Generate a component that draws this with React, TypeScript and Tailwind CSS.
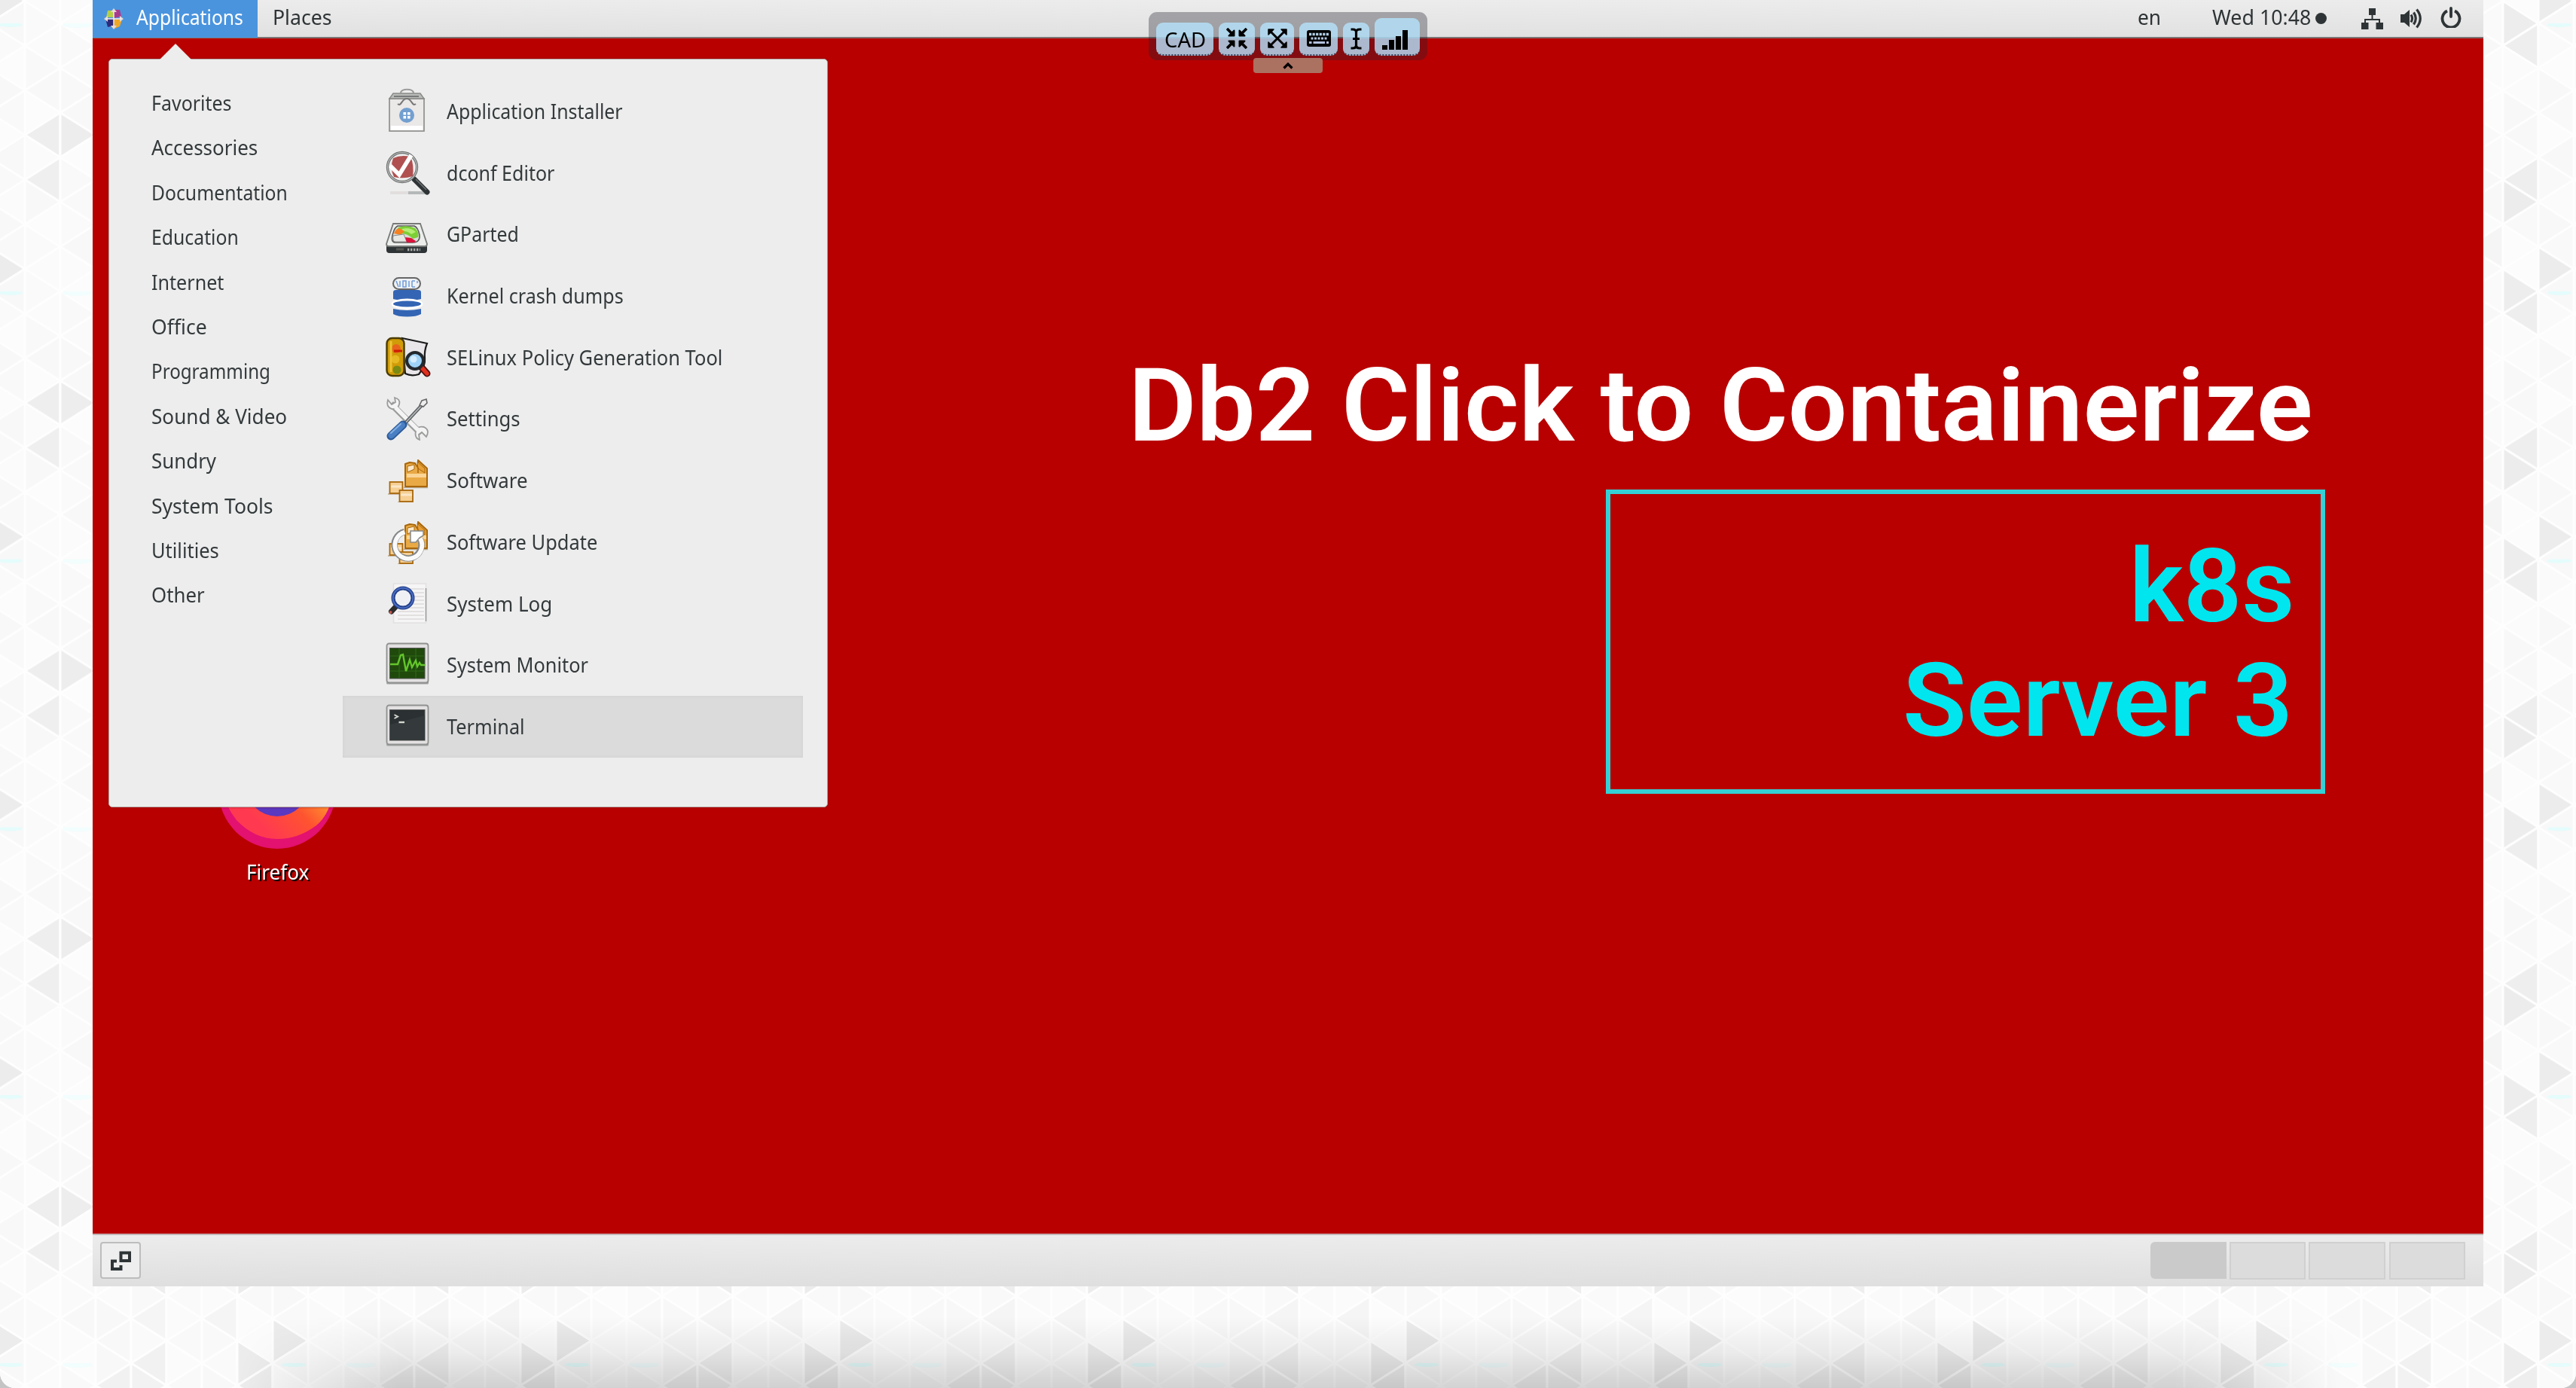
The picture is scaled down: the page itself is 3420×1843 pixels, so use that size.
import { useLayoutEffect, useRef, useState } from "react";
import type { ReactNode } from "react";

/* Text squeezed or stretched horizontally to a given width. */
function Fit({ w, children }: { w: number; children: ReactNode }) {
  const ref = useRef<HTMLSpanElement>(null);
  const [scale, setScale] = useState(1);
  useLayoutEffect(() => {
    if (ref.current) setScale(w / ref.current.offsetWidth);
  }, [w]);
  return (
    <span className="block whitespace-nowrap" style={{ width: w }}>
      <span ref={ref} className="inline-block origin-left whitespace-nowrap" style={{ transform: `scaleX(${scale})` }}>
        {children}
      </span>
    </span>
  );
}

/* ---------- Triangle backdrop ---------- */
const CW = 47;
const RH = 29.65;
const DARK: Record<string, string> = {
  "0:5": "#eeeeee", "0:7": "#efefef", "1:5": "#ededed", "7:11": "#ececec",
  "2:1": "#f1f1f1", "3:1": "#f2f2f2", "3:0": "#f1f1f1", "3:10": "#f5f5f5", "3:8": "#eeeeee",
  "5:10": "#f5f5f5", "6:8": "#ececec", "6:0": "#ededed", "6:1": "#eeeeee", "6:7": "#eeeeee",
};
const LIGHT = ["#fafafa", "#f9f9f9", "#fcfcfc", "#fbfbfb", "#f8f8f8"];

function Backdrop() {
  const tris: ReactNode[] = [];
  for (let c = 0; c < 8; c++) {
    for (let k = -1; k <= 12; k++) {
      const kk = (k + 12) % 12;
      const apexLeft = (c + kk) % 2 === 1;
      const xa = apexLeft ? c * CW : (c + 1) * CW;
      const xb = apexLeft ? (c + 1) * CW : c * CW;
      const fill = DARK[`${c}:${kk}`] ?? LIGHT[(c * 7 + kk * 3 + ((c * kk) % 4)) % 5];
      tris.push(
        <polygon key={`${c}-${k}`} points={`${xa},${k * RH} ${xb},${(k - 1) * RH} ${xb},${(k + 1) * RH}`} fill={fill} stroke="#fefefe" strokeWidth="3" strokeLinejoin="round" />
      );
    }
  }
  return (
    <svg className="absolute inset-0 h-full w-full">
      <defs>
        <pattern id="tri" patternUnits="userSpaceOnUse" x="33" y="31" width="376" height="355.8">
          {tris}
          <ellipse cx="357" cy="2" rx="16" ry="3" fill="#e4fcfc" />
          <ellipse cx="70" cy="2" rx="20" ry="4" fill="#f2fdfd" />
        </pattern>
      </defs>
      <rect width="100%" height="100%" fill="url(#tri)" />
    </svg>
  );
}

/* ---------- Menu icons, each on a 60 by 60 canvas ---------- */
function BagIcon() {
  return (
    <>
      <rect x="7" y="16" width="46" height="43" fill="#ebe8e8" stroke="#888a85" strokeWidth="1.6" />
      <rect x="9" y="52" width="42" height="6" fill="#fff" />
      <path d="M7 16 12 9H48L53 16Z" fill="#b9bbb8" stroke="#888a85" strokeWidth="1.4" />
      <path d="M13 13H46" stroke="#77797a" strokeWidth="2" />
      <path d="M22 9C22 2 39 2 39 9" fill="none" stroke="#9a9c99" strokeWidth="2.2" />
      <path d="M18 23C23 27 23 16 30 16S37 27 42 23" fill="none" stroke="#777" strokeWidth="2" />
      <circle cx="30" cy="38" r="10" fill="#729fcf" />
      <path d="M25.5 34h3.6v3.4h-3.6zM31 34h3.6v3.4H31zM25.5 39h3.6v3.4h-3.6zM31 39h3.6v3.4H31z" fill="#fff" />
    </>
  );
}
function DconfIcon() {
  return (
    <>
      <path d="M8 59H32" stroke="#e2dede" strokeWidth="4" />
      <path d="M32 59H56" stroke="#b5b8b8" strokeWidth="4" />
      <path d="M40 41 57 58" stroke="#2e3436" strokeWidth="7" strokeLinecap="round" />
      <path d="M42 41 56 55" stroke="#777" strokeWidth="1.2" />
      <circle cx="24" cy="25" r="19.5" fill="#eee" stroke="#6f7271" strokeWidth="3.4" />
      <circle cx="24" cy="25" r="19.5" fill="none" stroke="#b9bbba" strokeWidth="1.2" />
      <path d="M12 13Q22 8 35 11Q40 22 38 37Q26 41 13 38Q7 26 12 13Z" fill="#b05050" />
      <path d="M8 23 20 35 36 9" fill="none" stroke="#fff" strokeWidth="5.5" />
    </>
  );
}
function GPartedIcon() {
  return (
    <>
      <path d="M3 46H57V54Q57 58 53 58H7Q3 58 3 54Z" fill="#2e3436" />
      <path d="M12 19H48L57 46Q57 49 54 49H6Q3 49 3 46Z" fill="#eceeec" stroke="#777a77" strokeWidth="1.8" />
      <path d="M18 22H40Q45 24 47 34Q48 44 38 44H14Q8 43 12 31Q14 24 18 22Z" fill="#d8dcd4" stroke="#555" strokeWidth="1.5" />
      <path d="M19 24Q30 20 41 25Q47 31 45 37L38 39Q30 30 14 32Z" fill="#7ccf35" />
      <path d="M24 26Q34 23 42 30L36 33Q30 28 22 29Z" fill="#b4ee75" />
      <path d="M13 32Q15 26 20 25L27 29 22 34Z" fill="#f58220" />
      <path d="M12 35 26 33 30 43H15Q11 43 12 35Z" fill="#e6e8e4" stroke="#888" strokeWidth="1" />
      <path d="M28 37 36 38 42 42 40 44H30Z" fill="#dc143c" />
      <path d="M31 53.5h17" stroke="#a8aaa8" strokeWidth="3.5" strokeDasharray="2.4 1.6" />
      <path d="M16 53h10" stroke="#555753" strokeWidth="3" />
    </>
  );
}
function KernelIcon() {
  return (
    <>
      <rect x="12" y="9" width="36" height="15" rx="7.5" fill="#eff1f4" stroke="#666" strokeWidth="2" />
      <path d="M16 13l3 8M21 13v8M25 13v8h4v-8zM33 13v8M37 13h4M37 21h4M37 13v8M44 13v3" fill="none" stroke="#6f9cd8" strokeWidth="1.5" />
      <path d="M12 28Q12 25 16 25H45Q49 25 49 28V37Q30 42 12 37Z" fill="#3465b4" />
      <ellipse cx="30.5" cy="43.5" rx="21" ry="7" fill="#fff" />
      <ellipse cx="30.5" cy="43.5" rx="18.5" ry="4" fill="#3465b4" />
      <path d="M12 50Q30 54 49 50V57Q43 60.500 30.500 60.500T12 57Z" fill="#3465b4" />
    </>
  );
}
function SelinuxIcon() {
  return (
    <>
      <path d="M24 7 57 14Q53 24 54 34T46 55Q36 58 28 54Z" fill="#e9e6e9" stroke="#1c1c1c" strokeWidth="2.2" />
      <rect x="3.500" y="7" width="23" height="50" rx="7" fill="#d09c08" stroke="#4a3c00" strokeWidth="2.4" />
      <circle cx="16" cy="21" r="6" fill="#e8641c" />
      <path d="M13 24h11" stroke="#cc1b00" strokeWidth="3" />
      <circle cx="15" cy="35" r="5.500" fill="#e6b822" />
      <circle cx="17" cy="49" r="5.500" fill="#7a8a12" />
      <path d="M9 11V52" stroke="#ecc437" strokeWidth="3" />
      <path d="M49 45 57 54" stroke="#501010" strokeWidth="9" strokeLinecap="round" />
      <path d="M49 45 57 54" stroke="#e0301e" strokeWidth="5.500" strokeLinecap="round" />
      <circle cx="41" cy="37" r="11" fill="#9fd2f7" stroke="#23282c" strokeWidth="4" />
      <circle cx="39" cy="35" r="4.500" fill="#d5edff" />
    </>
  );
}
function SettingsIcon() {
  return (
    <>
      <path d="M9 13 49 53" stroke="#9a9c9a" strokeWidth="8.500" />
      <path d="M5 8Q2 17 10 20Q18 21 20 14T14 5L15 11 10 14Z" fill="#f4f4f4" stroke="#9a9c9a" strokeWidth="1.800" />
      <path d="M56 57Q61 48 53 44Q44 42 42 50T47 61L46 54 50 51Z" fill="#f4f4f4" stroke="#9a9c9a" strokeWidth="1.800" />
      <path d="M15 18 45 48" stroke="#f4f4f4" strokeWidth="5.500" />
      <path d="M25 42 50 15" stroke="#5d6063" strokeWidth="4.600" />
      <path d="M26 41 50 15" stroke="#b8bbbd" strokeWidth="1.600" />
      <path d="M47 15 50 9 56 7 57 12 52 17Z" fill="#eee" stroke="#666" strokeWidth="1.600" />
      <path d="M25 41 9 56" stroke="#2d5a98" strokeWidth="11" strokeLinecap="round" />
      <path d="M24 41.500 9.500 55" stroke="#4a7fc4" strokeWidth="8" strokeLinecap="round" />
      <path d="M22 40 9 52" stroke="#85aee0" strokeWidth="2" strokeLinecap="round" />
    </>
  );
}
function Boxes() {
  return (
    <>
      <path d="M5 51H26M18 62H39M26 42.500H58" stroke="#b9a890" strokeWidth="1.500" />
      <rect x="7.500" y="35" width="17" height="15" fill="#f6cf94" stroke="#a8660a" strokeWidth="1.800" />
      <path d="M9 41H23" stroke="#fbe7c8" strokeWidth="3" />
      <rect x="20.500" y="46" width="17.500" height="15" fill="#f6cf94" stroke="#a8660a" strokeWidth="1.800" />
      <path d="M22 52H37" stroke="#fbe7c8" strokeWidth="3" />
      <path d="M28 11 34 9 41 10 45 16V6L57 17V41H28Z" fill="#e9a945" stroke="#a8660a" strokeWidth="2" strokeLinejoin="round" />
      <path d="M31 14 40 12V18L31 22Z" fill="#fbe7c8" stroke="#a8660a" strokeWidth="1" />
      <path d="M44 8 45 17 54 23V17Z" fill="#e89f35" stroke="#a8660a" strokeWidth="1" />
      <path d="M30 24H56V29H30Z" fill="#fbd596" />
      <path d="M45 16V23" stroke="#a8660a" strokeWidth="1.500" />
    </>
  );
}
function UpdateIcon() {
  return (
    <>
      <Boxes />
      <path d="M27 19A18 18 0 1 0 48 29" fill="none" stroke="#85888a" strokeWidth="8.500" />
      <path d="M35 18H52V24L47 27 42 33H35Z" fill="#fff" stroke="#85888a" strokeWidth="1.500" />
      <path d="M27.500 19.500A18 18 0 1 0 48 28" fill="none" stroke="#fafafa" strokeWidth="5.800" />
      <path d="M37 31V20H50V24L46 26Z" fill="#fff" />
    </>
  );
}
function LogIcon() {
  return (
    <>
      <rect x="12.500" y="6" width="43" height="52" fill="#f6f5f5" stroke="#e2dfdf" strokeWidth="1.500" />
      <path d="M55.500 12V56" stroke="#999" strokeWidth="1.500" />
      <path d="M18 13H53M18 18H53M18 23H53M18 28H53M18 33H53M18 38H53M18 43H53M18 48H53M18 53H53" stroke="#e3e0e0" strokeWidth="1.800" />
      <path d="M16 36 9.500 43" stroke="#2c2c2c" strokeWidth="7" strokeLinecap="round" />
      <circle cx="8.500" cy="44" r="2" fill="#c05a50" />
      <circle cx="25" cy="25" r="13" fill="#eef0f4" stroke="#23408a" strokeWidth="5" />
      <circle cx="25" cy="25" r="13.300" fill="none" stroke="#4a6cc0" strokeWidth="2" />
    </>
  );
}
function Screen({ dark }: { dark?: boolean }) {
  return (
    <>
      <rect x="3" y="55" width="56" height="3.500" rx="1.500" fill="#a3a5a6" />
      <rect x="3.500" y="4.500" width="55" height="52" rx="3" fill="#e2e0e0" stroke="#8f918f" strokeWidth="1.800" />
      <rect x="7.500" y="10.500" width="46.500" height="40.500" fill={dark ? "#2b3133" : "#1f4a0c"} stroke="#555" strokeWidth="1" />
    </>
  );
}
function MonitorIcon() {
  return (
    <>
      <Screen />
      <path d="M8 21H53M8 41H53M20 11V50M42 11V50" stroke="#2f6a17" strokeWidth="1" />
      <path d="M8 32H18L22 20 25 19 29 41 34 26 37 36 42 27 44 35 47 30 49 33H54" fill="none" stroke="#63c52b" strokeWidth="2.400" />
    </>
  );
}
function TerminalIcon() {
  return (
    <>
      <Screen dark />
      <path d="M8 51V30L54 18V51Z" fill="#343a3c" />
      <path d="M13.500 17 18 19.500 13.500 22" fill="none" stroke="#d3d7cf" strokeWidth="2" />
      <path d="M19.500 27H27" stroke="#d3d7cf" strokeWidth="2.400" />
    </>
  );
}

const categories: [string, number][] = [
  ["Favorites", 107], ["Accessories", 141], ["Documentation", 181], ["Education", 116], ["Internet", 96],
  ["Office", 74], ["Programming", 158], ["Sound & Video", 180], ["Sundry", 86], ["System Tools", 162],
  ["Utilities", 90], ["Other", 71],
];

const apps: [string, number, () => ReactNode][] = [
  ["Application Installer", 234, BagIcon],
  ["dconf Editor", 143, DconfIcon],
  ["GParted", 96, GPartedIcon],
  ["Kernel crash dumps", 235, KernelIcon],
  ["SELinux Policy Generation Tool", 366, SelinuxIcon],
  ["Settings", 98, SettingsIcon],
  ["Software", 108, Boxes],
  ["Software Update", 200, UpdateIcon],
  ["System Log", 140, LogIcon],
  ["System Monitor", 188, MonitorIcon],
  ["Terminal", 104, TerminalIcon],
];

function TopBar() {
  return (
    <header className="flex h-[51px] shrink-0 items-start border-b-2 border-[#7d7575] bg-linear-to-b from-[#ececec] to-[#e2e1e1] text-[28px] leading-[45px] text-[#2e3436]">
      <div className="flex h-[50px] w-[219px] shrink-0 bg-[#4a94de] pl-[15px] text-white">
        <svg className="mt-[11px] mr-[17px] h-[28px] w-[26px]" viewBox="0 0 26 28">
          <path d="M5 3h8v9H3Z" fill="#b5cf49" />
          <path d="M13 2h8l2 9-10 2Z" fill="#a93b8c" />
          <path d="M2 14h11v9l-8 2Z" fill="#2f2a78" />
          <path d="M13 14l11 1-3 9-7 3Z" fill="#efa724" />
          <path d="M13 0l4 5h-8ZM26 14l-5 4v-8ZM13 28l-4-5h8ZM0 14l5-4v8Z" fill="#e8d8d0" />
          <path d="M13 4V24M3 14H23" stroke="#f4eef0" strokeWidth="1.500" />
        </svg>
        <Fit w={142}>Applications</Fit>
      </div>
      <div className="ml-[20px]"><Fit w={79}>Places</Fit></div>
      <div className="ml-auto"><Fit w={31}>en</Fit></div>
      <div className="ml-[68px]"><Fit w={131}>Wed 10:48</Fit></div>
      <div className="mt-[17px] ml-[6px] size-[15px] rounded-full bg-[#2e3436]" />
      <svg className="mt-[11px] ml-[46px] h-[28px] w-[29px]" viewBox="0 0 29 28" fill="#2e3436">
        <path d="M10 0h9v9h-9zM0 19h9.500v9H0zM19.500 19H29v9h-9.500zM13.500 9h2v5h9.500v5h-2v-3H6v3H4v-5h9.500z" />
      </svg>
      <svg className="mt-[11px] ml-[23px] h-[27px] w-[29px]" viewBox="0 0 29 27" fill="none" stroke="#2e3436" strokeWidth="3.200">
        <path d="M0 8H5L12 2V25L5 19H0Z" fill="#2e3436" stroke="none" />
        <path d="M14 8.500Q17 13.500 14 18.500M17.500 5.500Q23 13.500 17.500 21.500M21.500 1.500Q31 13.500 21.500 25.500" />
      </svg>
      <svg className="mt-[9px] mr-[29px] ml-[24px] h-[28px] w-[28px]" viewBox="0 0 28 28" fill="none" stroke="#2e3436" strokeWidth="3.800">
        <path d="M9 5.500A11.500 11.500 0 1 0 19 5.500" />
        <path d="M14 2V13" strokeLinecap="round" />
      </svg>
    </header>
  );
}

function ApplicationsMenu() {
  return (
    <div className="absolute top-[78px] left-[21px] h-[994px] w-[955px] rounded-[5px] border border-[#b9a6a6] bg-[#ededed] shadow-[0_0_3px_#5d000080]">
      <svg className="absolute top-[-21px] left-[66px] h-[22px] w-[44px]" viewBox="0 0 44 22">
        <path d="M0 22 22 0 44 22Z" fill="#ededed" />
      </svg>
      <div className="flex pt-[28px] text-[28px] text-[#343a3c]">
        <ul className="w-[310px] pl-[56px]">
          {categories.map(([name, w]) => (
            <li key={name} className="h-[59.4px] leading-[59.4px]"><Fit w={w}>{name}</Fit></li>
          ))}
        </ul>
        <ul className="w-[611px]">
          {apps.map(([name, w, Icon]) => (
            <li key={name} className={name === "Terminal" ? "flex h-[81.7px] bg-[#dbdbdb] pl-[55px] leading-[81.7px] shadow-[inset_0_0_4px_#cfcfcf]" : "flex h-[81.7px] pl-[55px] leading-[81.7px]"}>
              <svg className="mt-[8px] mr-[21px] h-[62px] w-[62px] shrink-0" viewBox="0 0 62 62">
                <Icon />
              </svg>
              <Fit w={w}>{name}</Fit>
            </li>
          ))}
        </ul>
      </div>
    </div>
  );
}

function ConsoleToolbar() {
  const btn = "flex h-[44px] items-center justify-center rounded-[9px] border-b-2 border-dotted border-[#3b4660] bg-[#b5e4fc]/80";
  return (
    <div className="absolute top-[16px] left-[1525px] flex w-[370px] flex-col items-center">
      <div className="flex h-[64px] w-[370px] items-end gap-[7px] rounded-[11px] bg-[#23232f]/35 pb-[6px] pl-[10px] text-black">
        <div className={`${btn} w-[76px] text-[28px] leading-[42px]`}>
          <div className="mt-[2px]"><Fit w={55}>CAD</Fit></div>
        </div>
        <div className={`${btn} w-[48px]`}>
          <svg className="h-[28px] w-[28px]" viewBox="0 0 28 28" stroke="#000" strokeWidth="3.600">
            <path d="M1 1 9 9M27 1 19 9M1 27 9 19M27 27 19 19" />
            <path d="M3.500 10.500h7v-7zM24.500 10.500h-7v-7zM3.500 17.500h7v7zM24.500 17.500h-7v7z" strokeWidth="2" strokeLinejoin="round" />
          </svg>
        </div>
        <div className={`${btn} w-[45px]`}>
          <svg className="h-[26px] w-[26px]" viewBox="0 0 26 26" stroke="#000" strokeWidth="3">
            <path d="M4 4 22 22M22 4 4 22" />
            <path d="M1 1h7l-7 7zM25 1h-7l7 7zM1 25h7l-7-7zM25 25h-7l7-7z" strokeWidth="1.500" strokeLinejoin="round" />
          </svg>
        </div>
        <div className={`${btn} w-[51px]`}>
          <svg className="h-[22px] w-[32px]" viewBox="0 0 32 22">
            <rect width="32" height="22" rx="3" />
            <path d="M3 5.500H29" stroke="#b2d0e6" strokeWidth="3.500" strokeDasharray="3.200 1.350" />
            <path d="M5.500 11H27" stroke="#b2c6e0" strokeWidth="3" strokeDasharray="3 1.500" />
            <path d="M3 16.500H6.500M8.500 16.500H24M26 16.500H29" stroke="#b2c0dc" strokeWidth="3" />
          </svg>
        </div>
        <div className={`${btn} w-[35px]`}>
          <svg className="h-[29px] w-[15px]" viewBox="0 0 15 29" fill="none" stroke="#000" strokeWidth="3.200">
            <path d="M0.500 2H3Q7.500 2 7.500 6Q7.500 2 12 2H14.500M0.500 27H3Q7.500 27 7.500 23Q7.500 27 12 27H14.500M7.500 5V24M3 14.500H12" />
          </svg>
        </div>
        <div className="flex h-[50px] w-[60px] items-end gap-[2.500px] rounded-[9px] border-b-2 border-dotted border-[#3b4660] bg-[#b5e4fc]/80 pb-[6px] pl-[10px]">
          <div className="h-[6px] w-[6.500px] bg-black" />
          <div className="h-[13px] w-[6.500px] bg-black" />
          <div className="h-[18px] w-[6.500px] bg-black" />
          <div className="h-[26px] w-[6.500px] bg-black" />
        </div>
      </div>
      <div className="-mt-[3px] flex h-[20px] w-[92px] items-center justify-center rounded-[4px] bg-[#ab7262]">
        <svg className="h-[9px] w-[14px]" viewBox="0 0 14 9" fill="none" stroke="#000" strokeWidth="3.200"><path d="M1.500 7.500 7 2 12.500 7.500" /></svg>
      </div>
    </div>
  );
}

function Wallpaper() {
  return (
    <main className="relative flex-1 overflow-hidden bg-[#b80000] font-['Roboto',sans-serif] text-[136px] font-semibold">
      <div className="flex flex-col items-end pt-[420px] pr-[210px]">
        <div className="mr-[16px] leading-[136px] text-white"><Fit w={1573}>Db2 Click to Containerize</Fit></div>
        <div className="mt-[43px] flex h-[404px] w-[955px] flex-col items-end border-[6px] border-[#35d0d6] pt-[47px] pr-[35px] leading-[151.500px] text-[#00e5ee]">
          <Fit w={219}>k8s</Fit>
          <div className="mr-[2px]"><Fit w={518}>Server 3</Fit></div>
        </div>
      </div>
      <div className="absolute top-[920px] left-[167px] flex w-[156px] flex-col items-center">
        <svg className="h-[156px] w-[156px]" viewBox="0 0 156 156">
          <defs>
            <linearGradient id="fox" x1="0.900" y1="0.500" x2="0.400" y2="0.900">
              <stop offset="0" stopColor="#ff9a2e" />
              <stop offset="0.450" stopColor="#ff5330" />
              <stop offset="1" stopColor="#ff3a50" />
            </linearGradient>
          </defs>
          <circle cx="78" cy="78" r="78" fill="#e3116f" />
          <path d="M4 78Q10 100 24 118Q48 143 78 143Q106 143 130 125Q150 108 152 76L140 20H12Z" fill="url(#fox)" />
          <circle cx="78" cy="71" r="42" fill="#5a38c0" />
        </svg>
        <div className="-mt-[2px] ml-px font-['Noto_Sans',sans-serif] text-[28px] leading-[64px] font-normal text-white [text-shadow:2px_2px_1px_#000]"><Fit w={83}>Firefox</Fit></div>
      </div>
    </main>
  );
}

function TaskBar() {
  return (
    <footer className="flex h-[70px] shrink-0 items-start border-t-2 border-[#c4b4b4] bg-linear-to-b from-[#ececec] to-[#dfdfdf] pt-[9px]">
      <div className="ml-[10px] flex h-[49px] w-[54px] items-center justify-center rounded-[4px] border-2 border-[#bdbdbd] bg-[#eeeeee]">
        <svg className="h-[26px] w-[27px]" viewBox="0 0 27 26" fill="none" stroke="#2e3436" strokeWidth="4">
          <path d="M13.500 2.500H25V13H13.500Z" />
          <path d="M8 13.500H2V24H13.500V19" />
        </svg>
      </div>
      <div className="mr-[24px] ml-auto flex gap-[4px]">
        <div className="h-[49px] w-[101px] rounded-l-[6px] bg-[#cacaca]" />
        <div className="h-[50px] w-[101px] border-2 border-[#d0d0d0] bg-[#dcdcdc]" />
        <div className="h-[50px] w-[102px] border-2 border-[#d0d0d0] bg-[#dcdcdc]" />
        <div className="ml-px h-[50px] w-[101px] border-2 border-[#d0d0d0] bg-[#dcdcdc]" />
      </div>
    </footer>
  );
}

export default function App() {
  return (
    <div className="h-[1843px] w-[3420px] overflow-hidden bg-[#c4c4c4] font-['Noto_Sans',sans-serif]">
      <div className="relative h-full w-full overflow-hidden rounded-b-[20px] bg-white">
        <Backdrop />
        <div className="absolute bottom-0 left-[310px] h-[95px] w-[2800px] bg-linear-to-t from-black/16 via-black/6 to-transparent [mask-image:linear-gradient(to_right,transparent,black_8%,black_92%,transparent)]" />
        <div className="relative mr-[123px] ml-[123px] flex h-[1708px] w-[3174px] flex-col">
          <TopBar />
          <Wallpaper />
          <TaskBar />
          <ApplicationsMenu />
        </div>
        <ConsoleToolbar />
      </div>
    </div>
  );
}
